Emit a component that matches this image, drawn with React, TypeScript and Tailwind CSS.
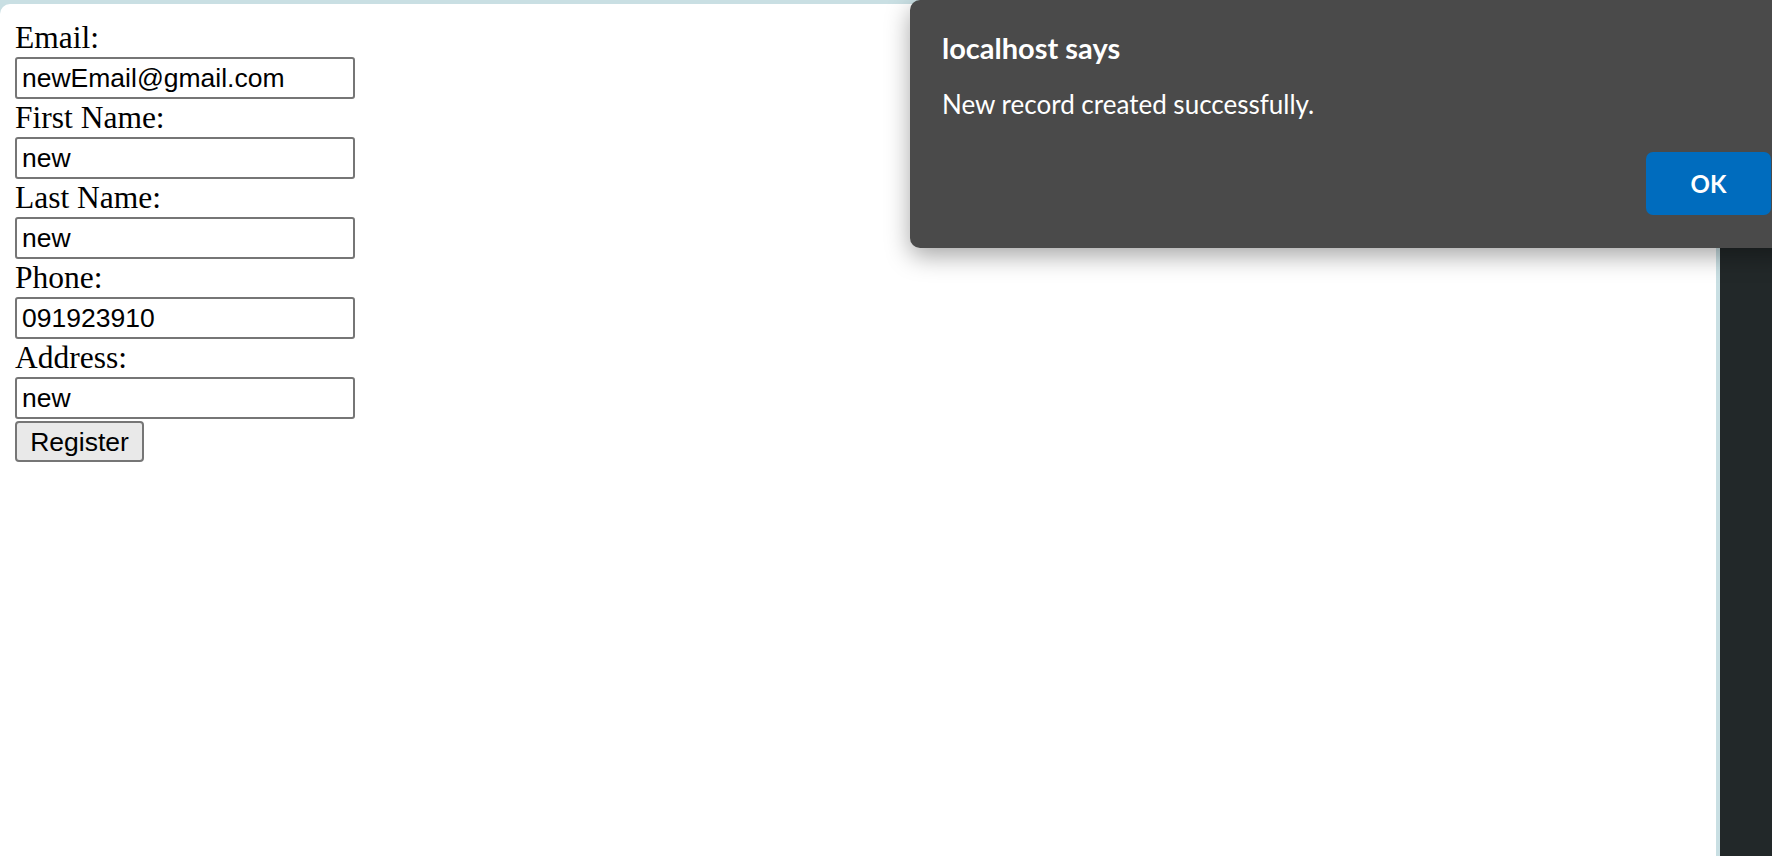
import React from 'react';

const fields = [
  { label: 'Email:', value: 'newEmail@gmail.com' },
  { label: 'First Name:', value: 'new' },
  { label: 'Last Name:', value: 'new' },
  { label: 'Phone:', value: '091923910' },
  { label: 'Address:', value: 'new' },
];

function RegisterForm() {
  return (
    <form className="flex flex-col items-start pl-[15px] pt-[15px] font-['Liberation_Serif',serif] text-black">
      {fields.map((f) => (
        <div key={f.label} className="flex flex-col items-start">
          <label className="h-[38px] text-[31.5px] leading-[38px]">{f.label}</label>
          <input
            type="text"
            defaultValue={f.value}
            className="h-[42px] w-[340px] rounded-[3px] border-2 border-[#767676] bg-white px-[5px] font-['Liberation_Sans',Arial,sans-serif] text-[26.5px] leading-[34px] text-black outline-none"
          />
        </div>
      ))}
      <button
        type="button"
        className="mt-[2px] h-[41px] w-[129px] rounded-[4px] border-2 border-[#767676] bg-[#e9e9e9] font-['Liberation_Sans',Arial,sans-serif] text-[26.5px] leading-[34px] text-black"
      >
        Register
      </button>
    </form>
  );
}

function AlertDialog() {
  return (
    <div className="absolute left-[910px] top-0 flex h-[248px] w-[885px] flex-col rounded-[10px] bg-[#4a4a4a] pl-[32px] pr-[24px] font-['Lato',sans-serif] text-white shadow-[0_8px_24px_rgba(0,0,0,0.35)]">
      <h1 className="mt-[30px] text-[29px] font-bold leading-[36px]">localhost says</h1>
      <p className="mt-[22px] text-[26px] leading-[32px]">New record created successfully.</p>
      <div className="mt-auto mb-[33px] flex justify-end">
        <button
          type="button"
          className="h-[63px] w-[125px] rounded-[7px] bg-[#006cbe] text-[24px] font-bold text-white"
        >
          OK
        </button>
      </div>
    </div>
  );
}

export default function App() {
  return (
    <div className="relative flex h-[856px] w-[1772px] overflow-hidden bg-[#c9dfe3] pt-[4px]">
      <div className="w-[1716px] rounded-tl-[10px] bg-white">
        <RegisterForm />
      </div>
      <div className="ml-[4px] flex-1 bg-[#222829]" />
      <AlertDialog />
    </div>
  );
}
